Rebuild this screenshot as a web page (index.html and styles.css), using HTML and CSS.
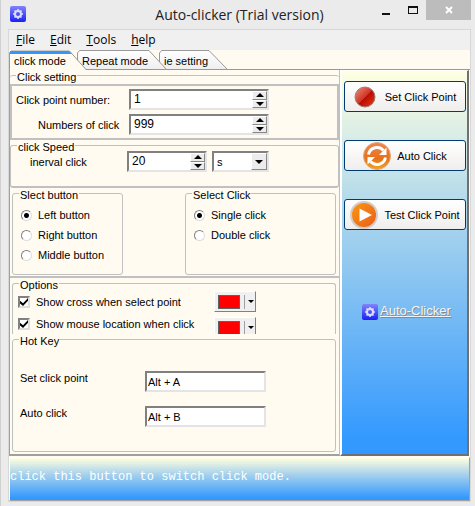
FILE: index.html
```
<!DOCTYPE html>
<html lang="en">
<head>
<meta charset="UTF-8">
<meta name="viewport" content="width=device-width, initial-scale=1.0">
<title>Auto-clicker (Trial version)</title>
<link rel="stylesheet" href="styles.css">
</head>
<body>

<svg class="defs" aria-hidden="true">
  <defs>
    <linearGradient id="blue" x1="0" y1="0" x2="0" y2="1">
      <stop offset="0" stop-color="#8085fb"/>
      <stop offset="1" stop-color="#1a20f5"/>
    </linearGradient>
    <linearGradient id="tabFill" x1="0" y1="0" x2="0" y2="1">
      <stop offset="0" stop-color="#ffffff"/>
      <stop offset="1" stop-color="#eeeeee"/>
    </linearGradient>
    <linearGradient id="red" x1="0" y1="0" x2="1" y2="1">
      <stop offset="0" stop-color="#f09080"/>
      <stop offset="0.5" stop-color="#cf3325"/>
      <stop offset="0.52" stop-color="#b80c00"/>
      <stop offset="1" stop-color="#ee3a14"/>
    </linearGradient>
    <linearGradient id="orange" x1="0" y1="0" x2="0" y2="1">
      <stop offset="0" stop-color="#ef8653"/>
      <stop offset="0.6" stop-color="#e87018"/>
      <stop offset="1" stop-color="#f6a51c"/>
    </linearGradient>
    <linearGradient id="play" x1="0" y1="0" x2="1" y2="1">
      <stop offset="0" stop-color="#fb9a10"/>
      <stop offset="1" stop-color="#ea5a1c"/>
    </linearGradient>
    <symbol id="gear" viewBox="0 0 16 16">
      <rect width="16" height="16" rx="2" fill="url(#blue)"/>
      <g stroke="#dcdcff" fill="none">
        <circle cx="8" cy="8" r="3" stroke-width="2"/>
        <path d="M8 3v2M8 11v2M3 8h2M11 8h2M4.5 4.5l1.3 1.3M10.2 10.2l1.3 1.3M4.5 11.5l1.3-1.3M10.2 5.8l1.3-1.3" stroke-width="1.6"/>
      </g>
    </symbol>
    <symbol id="up" viewBox="0 0 8 4"><path d="M4 0L8 4H0z"/></symbol>
    <symbol id="down" viewBox="0 0 8 4"><path d="M0 0H8L4 4z"/></symbol>
  </defs>
</svg>

<div class="window">
  <header class="titlebar">
    <svg class="app-icon"><use href="#gear"/></svg>
    <h1>Auto-clicker (Trial version)</h1>
    <div class="window-buttons">
      <button type="button" aria-label="Minimize"><svg width="10" height="10"><path d="M1 8h8v2H1z" fill="#111"/></svg></button>
      <button type="button" aria-label="Maximize"><svg width="10" height="10"><path d="M0 1h10v8H0zM1 3v5h8V3z" fill="#111" fill-rule="evenodd"/></svg></button>
      <button type="button" class="close" aria-label="Close"><svg width="8" height="8"><path d="M1 1l6 6M7 1L1 7" stroke="#fff" stroke-width="2"/></svg></button>
    </div>
  </header>

  <div class="client">
    <nav class="menu">
      <button type="button"><u>F</u>ile</button>
      <button type="button"><u>E</u>dit</button>
      <button type="button"><u>T</u>ools</button>
      <button type="button"><u>h</u>elp</button>
    </nav>

    <div class="tabs" role="tablist">
      <button type="button" class="tab active" role="tab" aria-selected="true">
        <svg width="78" height="20"><path d="M0 20V3L2 1H60L77 20z" fill="#fffbf0"/><path d="M0.5 20V2.5L2 1H60.5L77 19.5" fill="none" stroke="#999"/><path d="M1 1H60L63 4H1z" fill="#3396ff"/></svg>
        <span>click mode</span>
      </button>
      <button type="button" class="tab repeat" role="tab" aria-selected="false">
        <svg width="90" height="20"><path d="M0.5 19.5V3L2.5 0.5H72L89.5 19.5z" fill="url(#tabFill)" stroke="#999"/></svg>
        <span>Repeat mode</span>
      </button>
      <button type="button" class="tab ie" role="tab" aria-selected="false">
        <svg width="69" height="20"><path d="M0.5 19.5V3L2.5 0.5H50L68.5 19.5z" fill="url(#tabFill)" stroke="#999"/></svg>
        <span>ie setting</span>
      </button>
    </div>

    <main class="main">
      <form class="settings">
        <fieldset class="click-setting">
          <legend>Click setting</legend>
          <div class="panel">
            <label for="points">Click point number:</label>
            <div class="spin">
              <input type="text" id="points" value="1">
              <div class="spin-buttons">
                <button type="button" aria-label="More points"><svg width="8" height="4"><use href="#up"/></svg></button>
                <button type="button" aria-label="Fewer points"><svg width="8" height="4"><use href="#down"/></svg></button>
              </div>
            </div>
            <label for="clicks" class="indent">Numbers of click</label>
            <div class="spin">
              <input type="text" id="clicks" value="999">
              <div class="spin-buttons">
                <button type="button" aria-label="More clicks"><svg width="8" height="4"><use href="#up"/></svg></button>
                <button type="button" aria-label="Fewer clicks"><svg width="8" height="4"><use href="#down"/></svg></button>
              </div>
            </div>
          </div>
        </fieldset>

        <fieldset class="speed">
          <legend>click Speed</legend>
          <div class="speed-row">
            <label for="interval">inerval click</label>
            <div class="spin short">
              <input type="text" id="interval" value="20">
              <div class="spin-buttons">
                <button type="button" aria-label="Longer interval"><svg width="8" height="4"><use href="#up"/></svg></button>
                <button type="button" aria-label="Shorter interval"><svg width="8" height="4"><use href="#down"/></svg></button>
              </div>
            </div>
            <div class="combo">
              <select aria-label="Interval unit">
                <option>s</option>
                <option>ms</option>
              </select>
              <span class="combo-arrow"><svg width="8" height="4"><use href="#down"/></svg></span>
            </div>
          </div>
        </fieldset>

        <div class="choices">
          <fieldset class="select-button">
            <legend>Slect button</legend>
            <label><input type="radio" name="button" checked>Left button</label>
            <label><input type="radio" name="button">Right button</label>
            <label><input type="radio" name="button">Middle button</label>
          </fieldset>
          <fieldset class="select-click">
            <legend>Select Click</legend>
            <label><input type="radio" name="click" checked>Single click</label>
            <label><input type="radio" name="click">Double click</label>
          </fieldset>
        </div>

        <fieldset class="options">
          <legend>Options</legend>
          <div class="option">
            <label><input type="checkbox" checked>Show cross when select point</label>
            <button type="button" class="color" aria-label="Cross color"><span class="swatch"></span><span class="drop"><svg width="6" height="3"><use href="#down"/></svg></span></button>
          </div>
          <div class="option">
            <label><input type="checkbox" checked>Show mouse location when click</label>
            <button type="button" class="color" aria-label="Location color"><span class="swatch"></span><span class="drop"><svg width="6" height="3"><use href="#down"/></svg></span></button>
          </div>
        </fieldset>

        <fieldset class="hotkey">
          <legend>Hot Key</legend>
          <div class="keys">
            <label for="key-set">Set click point</label>
            <input type="text" id="key-set" value="Alt + A">
            <label for="key-auto">Auto click</label>
            <input type="text" id="key-auto" value="Alt + B">
          </div>
        </fieldset>
      </form>

      <aside class="side">
        <button type="button" class="action wide">
          <svg width="22" height="22" viewBox="0 0 22 22"><circle cx="11" cy="11" r="10" fill="url(#red)" stroke="#9a8078"/></svg>
          Set Click Point
        </button>
        <button type="button" class="action">
          <svg width="28" height="28" viewBox="0 0 28 28">
            <circle cx="14" cy="14" r="13.5" fill="url(#orange)" stroke="#e0a878"/>
            <g fill="none" stroke="#fff" stroke-width="3"><path d="M5.500 12.500C7 5 16 3.500 20.500 8.500"/><path d="M22.500 15.500C21 23 12 24.500 7.500 19.500"/></g>
            <path d="M23.500 5.500V13H16zM4.500 22.500V15H12z" fill="#fff"/>
          </svg>
          Auto Click
        </button>
        <button type="button" class="action">
          <svg width="28" height="28" viewBox="0 0 28 28"><circle cx="14" cy="14" r="13" fill="url(#play)" stroke="#d0cdcb" stroke-width="2"/><path d="M9.500 7.500L22 14L9.500 20.500z" fill="#fff"/></svg>
          Test Click Point
        </button>
        <a href="#" class="home"><svg class="app-icon"><use href="#gear"/></svg><span>Auto-Clicker</span></a>
      </aside>
    </main>

    <footer class="status">click this button to switch click mode.</footer>
  </div>
</div>

</body>
</html>
```
FILE: styles.css
```
* {
  box-sizing: border-box;
}

body {
  margin: 0;
  background-color: #ebebeb;
  color: #000;
  font-family: "Liberation Sans", Arial, sans-serif;
  font-size: 11px;
  line-height: 14px;
}

button, input, select {
  font: inherit;
  color: inherit;
  margin: 0;
  padding: 0;
}

svg {
  display: block;
  flex: none;
}

.defs {
  position: absolute;
  width: 0;
  height: 0;
}

.window {
  min-height: 100vh;
  padding: 0 4px 4px 7px;
  border-left: 1px solid #d0d0d0;
}

/* title bar */
.titlebar {
  display: grid;
  grid-template-columns: 1fr auto 1fr;
  height: 29px;
}

.app-icon {
  width: 16px;
  height: 16px;
}

.titlebar .app-icon {
  margin: 6px 0 0 2px;
}

.titlebar h1 {
  margin: 4px 0 0;
  font-family: "Open Sans", "Segoe UI", sans-serif;
  font-size: 14px;
  font-weight: normal;
  line-height: 22px;
  color: #222;
  white-space: nowrap;
}

.window-buttons {
  display: flex;
  justify-content: flex-end;
}

.window-buttons button {
  display: flex;
  align-items: center;
  justify-content: center;
  width: 27px;
  height: 20px;
  border: none;
  background: none;
}

.window-buttons .close {
  width: 45px;
  background-color: #bcbcbc;
}

.client {
  border: 1px solid #d8d8d8;
  background-color: #fffbf0;
}

/* menu */
.menu {
  display: flex;
  gap: 15px;
  height: 20px;
  padding-left: 7px;
  background-color: #f0f0f0;
  font-family: "Open Sans", "Segoe UI", sans-serif;
  font-size: 12px;
}

.menu button {
  border: none;
  background: none;
}

/* tabs */
.tabs {
  display: flex;
  height: 20px;
  border-bottom: 1px solid #999;
}

.tab {
  position: relative;
  z-index: 1;
  width: 78px;
  height: 20px;
  padding: 2px 0 0 5px;
  border: none;
  background: none;
  text-align: left;
  white-space: nowrap;
}

.tab svg {
  position: absolute;
  top: 0;
  left: 0;
  z-index: -1;
}

.tab.active {
  z-index: 3;
}

.tab.repeat {
  z-index: 2;
  width: 90px;
  margin-left: -10px;
}

.tab.ie {
  width: 69px;
  margin-left: -8px;
}

/* main area */
.main {
  display: grid;
  grid-template-columns: 1fr 129px;
  padding-right: 1px;
  border-left: 1px solid #a0a0a0;
}

.settings {
  border-right: 1px solid #c0c0c0;
  border-bottom: 2px solid #a0a0a0;
}

fieldset {
  min-width: 0;
  margin: 0;
  padding: 0;
  border: 1px solid #c0c0c0;
  border-radius: 3px;
}

/* text hangs a little below the border line */
legend {
  height: 11px;
  margin-left: 6px;
  padding: 0 1px;
  line-height: 15px;
}

.click-setting {
  padding-top: 3px;
  border-width: 1px 0 0;
}

.panel {
  display: grid;
  grid-template-columns: 116px 140px;
  row-gap: 4px;
  align-items: center;
  padding: 3px 0 3px 1px;
  border: 2px solid #c0c0c0;
}

.panel label {
  padding-left: 3px;
}

.panel .indent {
  padding-left: 25px;
}

.spin, .keys input, .combo {
  height: 21px;
  border: 2px solid;
  border-color: #808080 #e4e4e4 #e4e4e4 #808080;
  background-color: #fff;
}

.spin {
  display: flex;
}

.spin input {
  flex: 1;
  min-width: 0;
  padding: 0 3px 2px;
  border: none;
  background: none;
  outline: none;
  font-size: 12px;
}

.spin-buttons {
  display: flex;
  flex-direction: column;
  width: 15px;
}

.spin-buttons button {
  display: flex;
  flex: 1;
  align-items: center;
  justify-content: center;
  min-height: 0;
  border: 1px solid;
  border-color: #fff #888 #888 #fff;
  background-color: #ececec;
}

.speed {
  border-width: 1px 1px 2px;
}

.speed-row {
  display: flex;
  padding: 0 0 14px 19px;
}

.speed-row label {
  width: 97px;
  padding-top: 4px;
}

.spin.short {
  width: 80px;
}

.combo {
  position: relative;
  width: 57px;
  margin-left: 5px;
}

.combo select {
  width: 100%;
  height: 17px;
  padding-left: 3px;
  border: none;
  background: none;
  outline: none;
  appearance: none;
}

.combo-arrow {
  position: absolute;
  top: 0;
  right: 0;
  display: flex;
  align-items: center;
  justify-content: center;
  width: 16px;
  height: 17px;
  border: 1px solid;
  border-color: #fff #888 #888 #fff;
  background-color: #ececec;
  pointer-events: none;
}

/* radio groups */
.choices {
  display: flex;
  justify-content: space-between;
  padding: 0 3px 1px 2px;
  border-bottom: 2px solid #c0c0c0;
}

.choices fieldset {
  height: 87px;
}

.choices label {
  display: flex;
  align-items: center;
  height: 20px;
  padding-left: 8px;
}

.choices legend + label {
  margin-top: 6px;
}

.select-button {
  width: 111px;
}

.select-click {
  width: 151px;
}

input[type="radio"] {
  width: 11px;
  height: 11px;
  margin-right: 6px;
  border: 1px solid;
  border-color: #808080 #ddd #ddd #808080;
  border-radius: 50%;
  background-color: #fff;
  appearance: none;
}

input[type="radio"]:checked {
  background-image: radial-gradient(circle, #000 2px, #fff 3px);
}

input[type="checkbox"] {
  display: grid;
  place-content: center;
  width: 12px;
  height: 12px;
  margin-right: 6px;
  border: 2px solid;
  border-color: #808080 #ddd #ddd #808080;
  background-color: #fff;
  appearance: none;
}

input[type="checkbox"]:checked::before {
  content: "";
  width: 8px;
  height: 8px;
  background-color: #000;
  clip-path: polygon(0 35%, 38% 65%, 100% 0, 100% 35%, 38% 100%, 0 70%);
}

.options, .hotkey {
  margin: 0 3px 0 2px;
}

.options {
  height: 56px;
  padding-top: 2px;
  border-bottom: none;
  border-radius: 3px 3px 0 0;
  overflow: hidden;
}

.option {
  display: flex;
  align-items: flex-start;
  height: 26px;
}

.option label {
  display: flex;
  align-items: center;
  width: 201px;
  height: 22px;
  padding-left: 5px;
  white-space: nowrap;
}

.option + .option label {
  height: 14px;
}

.color {
  display: flex;
  align-items: center;
  flex: none;
  width: 42px;
  height: 21px;
  padding-left: 3px;
  border: 1px solid;
  border-color: #fff #808080 #808080 #fff;
  background-color: #f0f0f0;
}

.swatch {
  width: 22px;
  height: 14px;
  border: 1px solid #606060;
  background-color: #f00;
}

.drop {
  display: flex;
  align-items: center;
  height: 14px;
  margin-left: 4px;
  padding-left: 3px;
  border-left: 1px solid #a0a0a0;
}

.hotkey {
  height: 118px;
  margin-bottom: 2px;
}

.keys {
  display: grid;
  grid-template-columns: 125px 121px;
  row-gap: 14px;
  padding: 26px 0 0 7px;
}

.keys input {
  padding: 0 1px;
  outline: none;
}

/* right side */
.side {
  display: flex;
  flex-direction: column;
  gap: 28px;
  padding: 10px 1px 0 2px;
  border: solid;
  border-width: 1px 2px 2px;
  border-color: #fff #707070 #707070 #fff;
  background-image: linear-gradient(#ffffe1, #b8dcea 32%, #3399ff 96%);
}

.action {
  display: flex;
  align-items: center;
  justify-content: center;
  gap: 6px;
  height: 31px;
  border: 1px solid #003c74;
  border-radius: 3px;
  background-image: linear-gradient(#fff, #f0eeec);
  white-space: nowrap;
}

.action.wide {
  gap: 9px;
}

.home {
  display: flex;
  gap: 2px;
  margin: 46px 0 0 18px;
  color: #f4f4f4;
  font-size: 13px;
  text-shadow: 1px 1px #888;
}

/* status bar */
.status {
  height: 44px;
  margin-top: 1px;
  padding: 12px 0;
  border: 1px solid;
  border-color: #fff #a0a0a0 #a0a0a0 #fff;
  background-image: linear-gradient(#ffffe1, #a5d0ec 40%, #3399ff 95%);
  color: #fff;
  font-family: "Liberation Mono", "Courier New", monospace;
  font-size: 12px;
}
```
